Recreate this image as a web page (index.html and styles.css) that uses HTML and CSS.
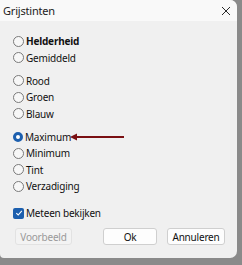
FILE: index.html
```html
<!DOCTYPE html>
<html>
<head>
<meta charset="utf-8">
<link rel="stylesheet" href="styles.css">
</head>
<body>
<div class="window">
  <div class="titlebar">
    <span class="title">Grijstinten</span>
    <svg class="close" width="10" height="10" viewBox="0 0 10 10"><path d="M1 1 L9 9 M9 1 L1 9" stroke="#2b2b2b" stroke-width="1" fill="none"/></svg>
  </div>
  <div class="content">
    <div class="group">
      <label class="row"><span class="radio"></span><span class="bold">Helderheid</span></label>
      <label class="row"><span class="radio"></span>Gemiddeld</label>
    </div>
    <div class="group">
      <label class="row"><span class="radio"></span>Rood</label>
      <label class="row"><span class="radio"></span>Groen</label>
      <label class="row"><span class="radio"></span>Blauw</label>
    </div>
    <div class="group">
      <label class="row marked"><span class="radio on"></span>Maximum
        <svg class="arrow" width="56" height="8" viewBox="0 0 56 8"><path d="M5 4 L54 4" stroke="#7a0f12" stroke-width="2"/><path d="M0 4 L7 0.5 L7 7.5 Z" fill="#7a0f12"/></svg>
      </label>
      <label class="row"><span class="radio"></span>Minimum</label>
      <label class="row"><span class="radio"></span>Tint</label>
      <label class="row"><span class="radio"></span>Verzadiging</label>
    </div>
    <label class="row check-row"><span class="check"><svg width="8" height="8" viewBox="0 0 8 8"><path d="M1.3 4.2 L3.2 6 L6.8 1.8" stroke="#fff" stroke-width="1.1" fill="none"/></svg></span>Meteen bekijken</label>
    <div class="buttons">
      <button class="btn disabled">Voorbeeld</button>
      <span class="spacer"></span>
      <button class="btn ok">Ok</button>
      <button class="btn">Annuleren</button>
    </div>
  </div>
</div>
</body>
</html>
```

FILE: styles.css
```css
html, body {
  margin: 0;
  padding: 0;
}
body {
  width: 242px;
  height: 265px;
  background: #8a8a8a;
  font-family: "Noto Sans", "Open Sans", sans-serif;
  font-size: 10px;
  color: #111;
  overflow: hidden;
}
.window {
  width: 237px;
  height: 258px;
  background: #f0f0f0;
  border-radius: 0 7px 7px 4px;
  overflow: hidden;
  display: flex;
  flex-direction: column;
}
.titlebar {
  height: 21px;
  background: #f9f9f9;
  display: flex;
  align-items: center;
  justify-content: space-between;
  padding: 0 6px 0 3px;
  flex: none;
}
.title {
  font-size: 11px;
  color: #222;
  letter-spacing: -0.2px;
}
.close {
  display: block;
  margin-top: 1px;
}
.content {
  display: flex;
  flex-direction: column;
  padding: 12px 12px 0 13px;
}
.group {
  display: flex;
  flex-direction: column;
  margin-bottom: 6.5px;
}
.row {
  height: 16.5px;
  display: flex;
  align-items: center;
  gap: 2px;
  letter-spacing: -0.2px;
  position: relative;
}
.bold {
  font-weight: bold;
  letter-spacing: -0.2px;
}
.radio {
  width: 9px;
  height: 9px;
  border: 1px solid #7a7a7a;
  border-radius: 50%;
  background: #f7f7f7;
  flex: none;
}
.radio.on {
  width: 4px;
  height: 4px;
  border: 3px solid #1c5fae;
  background: #ffffff;
}
.arrow {
  position: absolute;
  left: 57px;
  top: 4.5px;
}
.check-row {
  margin-top: 4px;
}
.check {
  width: 11px;
  height: 11px;
  border-radius: 2px;
  background: #1c5fae;
  display: flex;
  align-items: center;
  justify-content: center;
  flex: none;
}
.check svg {
  display: block;
}
.buttons {
  display: flex;
  margin-top: 6.5px;
  gap: 10px;
  padding-left: 2px;
}
.spacer {
  width: 11px;
}
.btn {
  height: 17px;
  border: 1px solid #cfcfcf;
  border-radius: 3px;
  background: #fdfdfd;
  font-family: inherit;
  font-size: 10px;
  color: #111;
  padding: 0;
  width: 58px;
  letter-spacing: -0.2px;
}
.btn.ok {
  width: 54px;
}
.btn.disabled {
  width: 57px;
  background: #f3f3f3;
  border-color: #e2e2e2;
  color: #9a9a9a;
}
```
